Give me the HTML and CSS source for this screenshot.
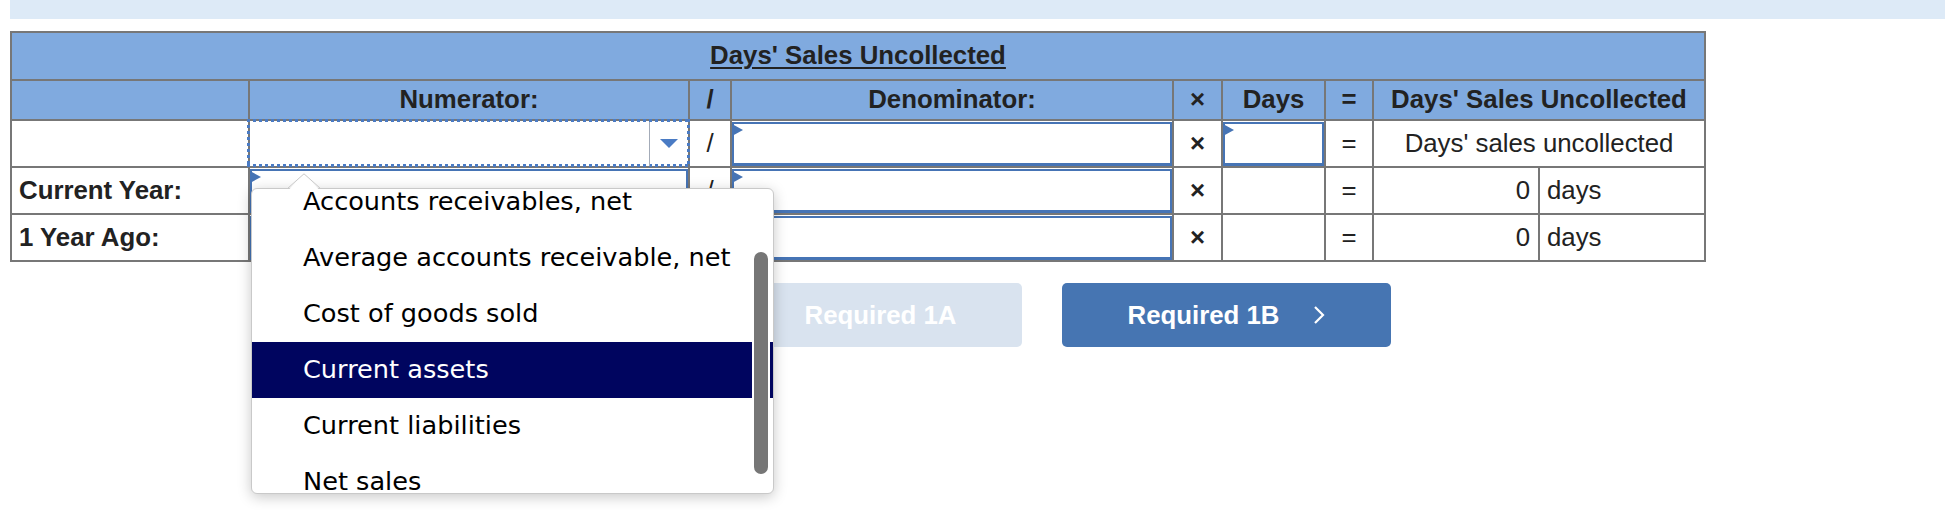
FILE: index.html
```html
<!DOCTYPE html>
<html lang="en">
<head>
<meta charset="utf-8">
<title>Days' Sales Uncollected</title>
<link rel="stylesheet" href="styles.css">
</head>
<body>
<div class="page">
  <div class="topbar"></div>
  <table class="calc">
    <colgroup>
      <col class="c-label">
      <col class="c-wide">
      <col class="c-op">
      <col class="c-wide2">
      <col class="c-x">
      <col class="c-days">
      <col class="c-eq">
      <col class="c-val">
      <col class="c-unit">
    </colgroup>
    <thead>
      <tr class="title-row">
        <th colspan="9"><span class="title">Days' Sales Uncollected</span></th>
      </tr>
      <tr class="head-row">
        <th></th>
        <th>Numerator:</th>
        <th>/</th>
        <th>Denominator:</th>
        <th>×</th>
        <th>Days</th>
        <th>=</th>
        <th colspan="2">Days' Sales Uncollected</th>
      </tr>
    </thead>
    <tbody>
      <tr>
        <td class="label"></td>
        <td class="field">
          <div class="select">
            <span class="select-btn"><span class="caret"></span></span>
            <div class="menu">
              <svg class="notch" width="34" height="17" viewBox="0 0 34 17">
                <polygon points="1.5,17 17,1.5 32.5,17" fill="#ffffff"/>
                <polyline points="0.5,15.5 17,0.8 33.5,15.5" fill="none" stroke="#c9c9c9" stroke-width="1"/>
              </svg>
              <ul class="menu-list">
                <li>Accounts receivables, net</li>
                <li>Average accounts receivable, net</li>
                <li>Cost of goods sold</li>
                <li class="selected">Current assets</li>
                <li>Current liabilities</li>
                <li>Net sales</li>
              </ul>
              <span class="thumb"></span>
            </div>
          </div>
        </td>
        <td class="op">/</td>
        <td class="field"><div class="input"></div></td>
        <td class="op times">×</td>
        <td class="field"><div class="input"></div></td>
        <td class="op">=</td>
        <td class="center" colspan="2">Days' sales uncollected</td>
      </tr>
      <tr>
        <td class="label">Current Year:</td>
        <td class="field"><div class="input"></div></td>
        <td class="op">/</td>
        <td class="field"><div class="input"></div></td>
        <td class="op times">×</td>
        <td></td>
        <td class="op">=</td>
        <td class="num">0</td>
        <td class="unit">days</td>
      </tr>
      <tr>
        <td class="label">1 Year Ago:</td>
        <td class="field"><div class="input"></div></td>
        <td class="op">/</td>
        <td class="field"><div class="input"></div></td>
        <td class="op times">×</td>
        <td></td>
        <td class="op">=</td>
        <td class="num">0</td>
        <td class="unit">days</td>
      </tr>
    </tbody>
  </table>
  <div class="nav">
    <div class="btn btn-prev">
      <svg class="chev" width="12" height="20" viewBox="0 0 12 20"><polyline points="10,2 2,10 10,18" fill="none" stroke="#ffffff" stroke-width="2.2"/></svg>
      <span>Required 1A</span>
    </div>
    <div class="btn btn-next">
      <span>Required 1B</span>
      <svg class="chev" width="12" height="20" viewBox="0 0 12 20"><polyline points="2,2 10,10 2,18" fill="none" stroke="#ffffff" stroke-width="2.2"/></svg>
    </div>
  </div>
</div>
</body>
</html>
```
FILE: styles.css
```css
html, body {
  margin: 0;
  padding: 0;
  background: #ffffff;
}

body {
  min-height: 510px;
  font-family: "Liberation Sans", Arial, Helvetica, sans-serif;
  color: #222222;
}

.page {
  min-height: 510px;
  padding-left: 10px;
}

.topbar {
  height: 19px;
  background: #ddeaf7;
}

.calc {
  margin-top: 12px;
  border-collapse: collapse;
  table-layout: fixed;
  width: 1696px;
  font-size: 25.8px;
}

.c-label { width: 238px; }
.c-wide { width: 440px; }
.c-op { width: 42px; }
.c-wide2 { width: 442px; }
.c-x { width: 49px; }
.c-days { width: 103px; }
.c-eq { width: 48px; }
.c-val { width: 166px; }
.c-unit { width: 166px; }

.calc th,
.calc td {
  border: 2px solid #777777;
  padding: 0 7px;
  vertical-align: middle;
  line-height: 1.15;
}

.calc th {
  background: #80aadf;
  font-weight: 700;
  text-align: center;
}

.title-row { height: 48px; }
.head-row { height: 40px; }
.calc tbody tr { height: 47px; }

.title {
  text-decoration: underline;
  text-decoration-thickness: 2px;
  text-underline-offset: 3px;
}

.calc td.label {
  font-weight: 700;
  text-align: left;
}

.calc td.field {
  padding: 0;
}

.calc td.op {
  padding: 0;
  text-align: center;
}

.calc td.times {
  font-weight: 700;
}

.calc td.center {
  text-align: center;
}

.calc td.num {
  text-align: right;
  padding-right: 8px;
}

.calc td.unit {
  text-align: left;
  padding-left: 7px;
}

/* text inputs */
.input {
  position: relative;
  box-sizing: border-box;
  height: 44px;
  border: 2px solid #4674b5;
  border-bottom-width: 3px;
  background: #ffffff;
}

.input::before {
  content: "";
  position: absolute;
  left: -2px;
  top: 0;
  border-left: 11px solid #4674b5;
  border-top: 6px solid transparent;
  border-bottom: 6px solid transparent;
}

/* select with focus ring */
.select {
  position: relative;
  box-sizing: border-box;
  height: 44px;
  background: #ffffff;
}

.select::before {
  content: "";
  position: absolute;
  top: -3px;
  right: -2px;
  bottom: -1px;
  left: -3px;
  pointer-events: none;
  background:
    repeating-linear-gradient(90deg, #4a7bc4 0 3px, transparent 3px 6px) left top / 100% 3px no-repeat,
    repeating-linear-gradient(90deg, #4a7bc4 0 3px, transparent 3px 6px) left bottom / 100% 3px no-repeat,
    repeating-linear-gradient(180deg, #4a7bc4 0 3px, transparent 3px 6px) left top / 3px 100% no-repeat,
    repeating-linear-gradient(180deg, #4a7bc4 0 3px, transparent 3px 6px) right top / 3px 100% no-repeat;
}

.select-btn {
  position: absolute;
  top: 0;
  right: 0;
  bottom: 0;
  width: 38px;
  border-left: 1px solid #a3abb8;
  display: flex;
  align-items: center;
  justify-content: center;
}

.caret {
  width: 0;
  height: 0;
  border-left: 9px solid transparent;
  border-right: 9px solid transparent;
  border-top: 9px solid #4a7bc4;
}

/* open dropdown list */
.menu {
  position: absolute;
  left: 1px;
  top: calc(100% + 22px);
  z-index: 10;
  box-sizing: border-box;
  width: 523px;
  height: 306px;
  border: 1px solid #c9c9c9;
  border-radius: 6px;
  background: #ffffff;
  box-shadow: 0 3px 14px rgba(0, 0, 0, 0.22);
  font-family: "DejaVu Sans", Verdana, sans-serif;
  font-size: 25.6px;
  color: #000000;
}

.notch {
  position: absolute;
  left: 35px;
  top: -16px;
  display: block;
}

.menu-list {
  list-style: none;
  margin: 0;
  padding: 0;
  height: 100%;
  overflow: hidden;
  border-radius: 5px;
}

.menu-list li {
  height: 56px;
  display: flex;
  align-items: center;
  padding-left: 51px;
  white-space: nowrap;
}

.menu-list li:first-child {
  margin-top: -15px;
}

.menu-list li.selected {
  background: #00055f;
  color: #ffffff;
}

.thumb {
  position: absolute;
  top: 61px;
  right: 3px;
  width: 14px;
  height: 222px;
  border: 2px solid #ffffff;
  border-radius: 9px;
  background: #767676;
}

/* navigation buttons */
.nav {
  display: flex;
  gap: 40px;
  margin-top: 21px;
  padding-left: 683px;
}

.btn {
  box-sizing: border-box;
  width: 329px;
  height: 64px;
  border-radius: 5px;
  display: flex;
  align-items: center;
  justify-content: center;
  gap: 34px;
  font-family: "Liberation Sans", Arial, sans-serif;
  font-weight: 700;
  font-size: 25.8px;
  color: #ffffff;
}

.btn-prev {
  background: #d9e3ef;
}

.btn-next {
  background: #4675b2;
}

.chev {
  display: block;
}
```
